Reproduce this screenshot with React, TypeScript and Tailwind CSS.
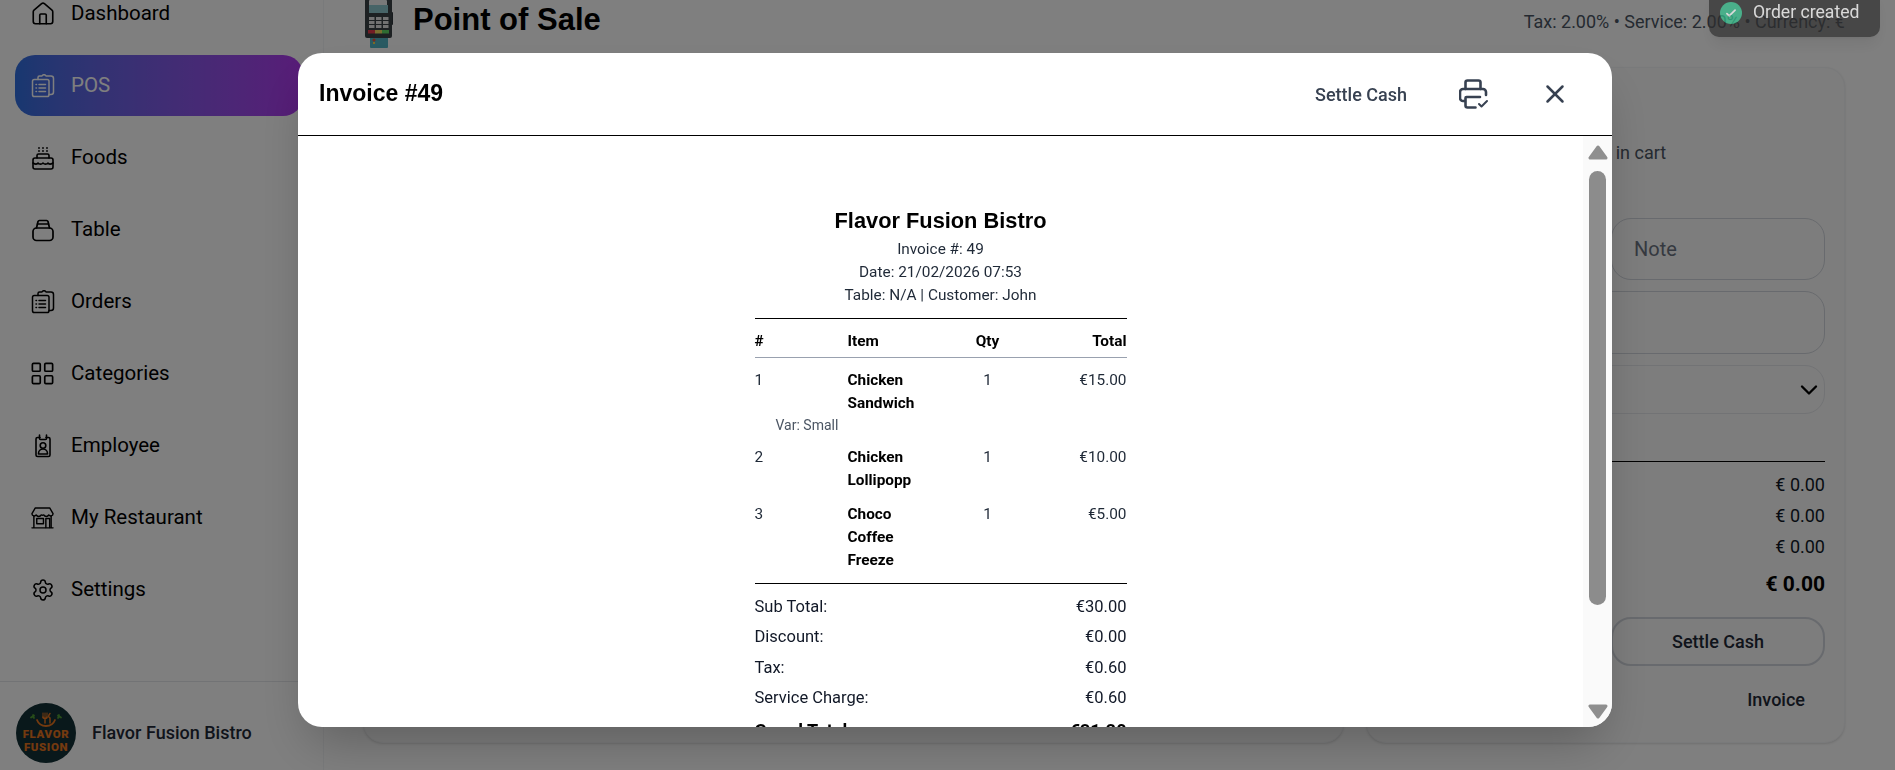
import { ChevronDown, House, LayoutGrid, Settings, X } from "lucide-react";
import type { ReactNode } from "react";

function ClipboardsIcon({ className }: { className?: string }) {
  return (
    <svg viewBox="0 0 24 24" fill="none" stroke="currentColor" strokeWidth="1.500" strokeLinecap="round" strokeLinejoin="round" className={className}>
      <path d="M7 5.500V3.500A1.500 1.500 0 0 1 8.500 2H11a2.200 2.200 0 0 1 4 0h5A2.500 2.500 0 0 1 22.500 4.500V18a2.500 2.500 0 0 1-2.500 2.500h-2" />
      <rect x="1.500" y="5.500" width="16.500" height="17" rx="1.800" />
      <path d="M5 10.500h.5M8 10.500h6.500M5 14h.5M8 14h6.500M5 17.500h.5M8 17.500h6.500" />
    </svg>
  );
}

function CakeIcon({ className }: { className?: string }) {
  return (
    <svg viewBox="0 0 24 24" fill="none" stroke="currentColor" strokeWidth="1.600" strokeLinecap="round" strokeLinejoin="round" className={className}>
      <path d="M8 2v.1M12 2v.1M16 2v.1M8 5v.1M12 5v.1M16 5v.1" strokeWidth="1.800" />
      <path d="M6 12V9.500A1.500 1.500 0 0 1 7.500 8h9A1.500 1.500 0 0 1 18 9.500V12" />
      <rect x="2" y="12" width="20" height="11" rx="2" />
      <path d="M2 17c2.500 1.500 4 1.500 5 0 1.300 1.500 3.700 1.500 5 0 1.300 1.500 3.700 1.500 5 0 1 1.500 2.500 1.500 5 0" />
    </svg>
  );
}

function TableIcon({ className }: { className?: string }) {
  return (
    <svg viewBox="0 0 24 24" fill="none" stroke="currentColor" strokeWidth="1.700" strokeLinecap="round" strokeLinejoin="round" className={className}>
      <path d="M5.500 10 7 3.500A1.500 1.500 0 0 1 8.500 2.500h7A1.500 1.500 0 0 1 17 3.500L18.500 10" />
      <path d="M6.500 6h11" />
      <rect x="2" y="10" width="20" height="12.500" rx="3.500" />
    </svg>
  );
}

function BadgeIcon({ className }: { className?: string }) {
  return (
    <svg viewBox="0 0 24 24" fill="none" stroke="currentColor" strokeWidth="1.600" strokeLinecap="round" strokeLinejoin="round" className={className}>
      <path d="M9 3.500H6.500A1.500 1.500 0 0 0 5 5v16a1.500 1.500 0 0 0 1.500 1.500h11A1.500 1.500 0 0 0 19 21V5a1.500 1.500 0 0 0-1.500-1.500H15" />
      <path d="M8.500 1v3.500a1 1 0 0 0 1 1h5a1 1 0 0 0 1-1V1" />
      <circle cx="12" cy="11.500" r="2.800" />
      <path d="M7.500 20v-.5a4.500 4.500 0 0 1 9 0v.5Z" />
    </svg>
  );
}

function StoreIcon({ className }: { className?: string }) {
  return (
    <svg viewBox="0 0 24 24" fill="none" stroke="currentColor" strokeWidth="1.500" strokeLinecap="round" strokeLinejoin="round" className={className}>
      <path d="M4.500 2h15L23 8a2.400 2.400 0 0 1-4.400 1.300 3 3 0 0 1-5.300 0 3 3 0 0 1-2.600 0 3 3 0 0 1-5.300 0A2.400 2.400 0 0 1 1 8Z" />
      <path d="M3 10.500V22.500M21 10.500V22.500M1 22.800h22" />
      <rect x="6" y="13" width="7" height="5.500" />
      <path d="M15.500 22.500V13h4v9.500" />
    </svg>
  );
}

function PrinterCheckIcon({ className }: { className?: string }) {
  return (
    <svg viewBox="0 0 30 30" fill="none" stroke="currentColor" strokeWidth="2.600" strokeLinecap="round" strokeLinejoin="round" className={className}>
      <path d="M6.500 10V3.500A2 2 0 0 1 8.500 1.500h11a2 2 0 0 1 2 2V10" />
      <path d="M6 22H4a3 3 0 0 1-3-3v-6a3 3 0 0 1 3-3h20a3 3 0 0 1 3 3v3" />
      <path d="M16.500 28.500H8.500a2 2 0 0 1-2-2V19a1 1 0 0 1 1-1H21" />
      <path d="m20 25 2.500 2.500L28 22" strokeWidth="2" />
    </svg>
  );
}

function TerminalArt() {
  return (
    <svg viewBox="0 0 28 51" className="ml-[2px] h-[51px] w-[28px] shrink-0">
      <rect x="5" y="38" width="18" height="13" rx="1" fill="#52b4c4" />
      <circle cx="9" cy="43" r="1.500" fill="#f0503c" />
      <rect x="8" y="45" width="2" height="2" fill="#f5d44a" />
      <rect x="26" y="15" width="2" height="13" rx="1" fill="#2f373c" />
      <rect x="0" y="0" width="27" height="41" rx="2" fill="#3a4247" />
      <rect x="4" y="3" width="18" height="11" rx="1" fill="#f2f3f3" />
      <rect x="4" y="8" width="19" height="8" fill="#8fc8cf" />
      {[20, 24, 28].map((y) =>
        [4, 11, 18].map((x) => <rect key={`${x}-${y}`} x={x} y={y} width="5.500" height="3" fill="#e4e4e4" />),
      )}
      <rect x="3" y="33" width="7" height="3.500" fill="#e63a4a" />
      <rect x="10" y="33" width="7" height="3.500" fill="#f2dc62" />
      <rect x="17" y="33" width="7" height="3.500" fill="#5ed864" />
    </svg>
  );
}

function LogoMark() {
  return (
    <svg viewBox="0 0 36 16" className="h-[16px] w-[36px]" fill="none" strokeLinecap="round">
      <path d="M3 5.500l3-2M6 6l-1-3M30 3.500l3 2M30 6l1-3" stroke="#4f9a32" strokeWidth="1.800" />
      <path d="M9 8c3 8 15 8 18 0" stroke="#e8741e" strokeWidth="1.800" />
      <path d="M15 1v4.500M17 1v4.500M19 1v4.500" stroke="#e8741e" strokeWidth="1" />
      <path d="M15 5c0 2 4 2 4 0M17 6v5" stroke="#e8741e" strokeWidth="1.500" />
      <path d="M22 1.500c-2 2-1.500 4 0 4.500v5" stroke="#e8741e" strokeWidth="1.500" />
    </svg>
  );
}

const navItems: { label: string; icon: ReactNode; active?: boolean }[] = [
  { label: "Dashboard", icon: <House className="h-[26px] w-[26px] shrink-0" strokeWidth={1.5} /> },
  { label: "POS", icon: <ClipboardsIcon className="h-[24px] w-[24px]" />, active: true },
  { label: "Foods", icon: <CakeIcon className="h-[24px] w-[24px]" /> },
  { label: "Table", icon: <TableIcon className="h-[24px] w-[24px]" /> },
  { label: "Orders", icon: <ClipboardsIcon className="h-[24px] w-[24px]" /> },
  { label: "Categories", icon: <LayoutGrid className="h-[27px] w-[27px] shrink-0" strokeWidth={1.5} /> },
  { label: "Employee", icon: <BadgeIcon className="h-[24px] w-[24px]" /> },
  { label: "My Restaurant", icon: <StoreIcon className="h-[23px] w-[23px]" /> },
  { label: "Settings", icon: <Settings className="h-[24px] w-[24px]" strokeWidth={1.5} /> },
];

const receiptItems = [
  { no: 1, name: ["Chicken", "Sandwich"], total: "€15.00", variant: "Var: Small" },
  { no: 2, name: ["Chicken", "Lollipopp"], total: "€10.00" },
  { no: 3, name: ["Choco", "Coffee", "Freeze"], total: "€5.00" },
];

const receiptTotals = [
  ["Sub Total:", "€30.00"],
  ["Discount:", "€0.00"],
  ["Tax:", "€0.60"],
  ["Service Charge:", "€0.60"],
];

function Sidebar() {
  return (
    <aside className="flex h-[770px] w-[324px] shrink-0 flex-col overflow-hidden border-r border-gray-100 bg-white">
      <nav className="-mt-[17px] flex flex-1 flex-col gap-[11px] pl-[15px] pr-[20px]">
        {navItems.map((item) => (
          <div
            key={item.label}
            className={
              item.active
                ? "flex h-[61px] items-center gap-[16px] rounded-[20px] bg-gradient-to-r from-[#2f6fe0] to-[#b038f0] pl-[15px] text-white"
                : "flex h-[61px] items-center gap-[16px] pl-[15px] text-black"
            }
          >
            <span className="flex h-[25px] w-[25px] items-center justify-center">{item.icon}</span>
            <span className="-mt-[1px] text-[20.500px]">{item.label}</span>
          </div>
        ))}
      </nav>
      <div className="flex h-[89px] items-start gap-4 border-t border-gray-200 pl-4 pt-[21px]">
        <div className="flex h-[60px] w-[60px] flex-col items-center rounded-full bg-[#123036] pt-[9px] text-[11.500px] leading-[13px] font-black tracking-[0.6px] text-[#e8741e]">
          <LogoMark />
          <span>FLAVOR</span>
          <span>FUSION</span>
        </div>
        <span className="mt-[18px] text-[18px] leading-[24px] font-medium text-[#1f2937]">Flavor Fusion Bistro</span>
      </div>
    </aside>
  );
}

function CartCard() {
  return (
    <section className="h-[676px] w-[479px] shrink-0 rounded-[20px] border border-gray-100 bg-[#fafafa] pt-[71px] pr-[19px] pl-5 shadow-sm">
      <p className="pr-[7px] text-center text-[18px] leading-[28px] text-[#4b5563]">No items in cart</p>
      <div className="mt-[51px] grid grid-cols-2 gap-[10px]">
        <div className="h-[62px] rounded-[20px] border border-gray-300" />
        <div className="flex h-[62px] items-center rounded-[20px] border border-gray-300 pb-[1px] pl-[22px] text-[20px] text-[#6b7280]">Note</div>
      </div>
      <div className="mt-[11px] h-[63px] rounded-[20px] border border-gray-300" />
      <div className="mt-[11px] flex h-[49px] items-center justify-end rounded-[20px] border border-gray-200 pr-[1px]">
        <ChevronDown className="h-[28px] w-[28px] text-black" strokeWidth={2} />
      </div>
      <div className="mt-[47px] border-t border-black pt-[7px] text-right text-[18px] leading-[31px] text-[#111827]">
        <p>€ 0.00</p>
        <p>€ 0.00</p>
        <p>€ 0.00</p>
        <p className="mt-[7px] text-[21px] font-bold text-black">€ 0.00</p>
      </div>
      <div className="mt-[17px] grid grid-cols-2 gap-[10px]">
        <div />
        <div className="flex h-[49px] items-center justify-center rounded-[20px] border-2 border-gray-300 text-[18px] font-medium text-[#1f2937]">Settle Cash</div>
      </div>
      <p className="mt-[20px] pr-[20px] text-right text-[18px] font-medium text-[#1f2937]">Invoice</p>
    </section>
  );
}

function Receipt() {
  return (
    <div className="mx-auto w-[372px] pt-[70px] font-['Roboto',sans-serif] text-black">
      <h3 className="text-center font-['Liberation_Sans',sans-serif] text-[21.800px] leading-[30px] font-bold">Flavor Fusion Bistro</h3>
      <div className="mt-[2px] text-center text-[15.360px] leading-[23px] text-[#1f2937]">
        <p>Invoice #: 49</p>
        <p>Date: 21/02/2026 07:53</p>
        <p>Table: N/A | Customer: John</p>
      </div>
      <div className="mt-[11px] border-t border-black" />
      <div className="grid h-[39px] grid-cols-[93px_80px_120px_79px] items-center border-b border-gray-400 pt-[7px] text-[15.360px] font-bold">
        <span>#</span>
        <span>Item</span>
        <span className="text-center">Qty</span>
        <span className="text-right">Total</span>
      </div>
      <div className="pt-[11px] text-[15.360px]">
        {receiptItems.map((item) => (
          <div key={item.no} className="pb-[11px]">
            <div className="grid grid-cols-[93px_80px_120px_79px] leading-[23px]">
              <span className="text-[#1f2937]">{item.no}</span>
              <span className="font-bold">
                {item.name.map((part) => (
                  <span key={part} className="block">{part}</span>
                ))}
              </span>
              <span className="text-center text-[#1f2937]">1</span>
              <span className="text-right text-[#1f2937]">{item.total}</span>
            </div>
            {item.variant ? <p className="pl-[21px] text-[14px] leading-[20px] text-[#4b5563]">{item.variant}</p> : null}
          </div>
        ))}
      </div>
      <div className="border-t border-black pt-[8px] text-[16.500px] leading-[30.400px] text-[#111827]">
        {receiptTotals.map(([label, value]) => (
          <div key={label} className="flex justify-between">
            <span>{label}</span>
            <span>{value}</span>
          </div>
        ))}
        <div className="flex justify-between pt-[2px] text-[18px] font-bold text-black">
          <span>Grand Total:</span>
          <span>€31.20</span>
        </div>
      </div>
    </div>
  );
}

function InvoiceModal() {
  return (
    <div className="fixed inset-0 flex items-start justify-start bg-black/50 pl-[298px] pt-[53px]">
      <div className="flex h-[674px] w-[1314px] flex-col overflow-hidden rounded-[24px] bg-white shadow-2xl">
        <header className="flex h-[83px] shrink-0 items-center justify-between border-b border-black pl-[21px] pr-[42px]">
          <h2 className="-mt-[1px] font-['Liberation_Sans',sans-serif] text-[23px] font-bold text-black">Invoice #49</h2>
          <div className="flex items-center text-[#374151]">
            <span className="mr-[52px] text-[18px] font-medium">Settle Cash</span>
            <PrinterCheckIcon className="mr-[51px] h-[30px] w-[30px]" />
            <X className="h-[30px] w-[30px]" strokeWidth={2} />
          </div>
        </header>
        <div className="flex min-h-0 flex-1">
          <div className="min-w-0 flex-1 overflow-hidden">
            <Receipt />
          </div>
          <div className="flex w-[29px] shrink-0 flex-col items-center bg-[#fafafa] pt-[9px] pb-[8px]">
            <svg viewBox="0 0 20 15" className="h-[15px] w-[20px]" fill="#8f8f8f" stroke="#8f8f8f" strokeWidth="3" strokeLinejoin="round">
              <path d="M10 2 2 13h16Z" />
            </svg>
            <div className="mt-[11px] w-[17px] flex-1 rounded-full bg-[#8c8c8c]" />
            <svg viewBox="0 0 20 15" className="mt-[99px] h-[15px] w-[20px]" fill="#8f8f8f" stroke="#8f8f8f" strokeWidth="3" strokeLinejoin="round">
              <path d="M10 13 2 2h16Z" />
            </svg>
          </div>
        </div>
      </div>
    </div>
  );
}

export default function App() {
  return (
    <div className="flex h-[770px] overflow-hidden bg-white font-['Roboto',sans-serif]">
      <Sidebar />
      <main className="min-w-0 flex-1 bg-white pl-[39px] pr-[50px]">
        <div className="-mt-[3px] flex h-[70px] items-start justify-between">
          <div className="flex items-start gap-[20px]">
            <TerminalArt />
            <h1 className="pt-[1px] font-['Liberation_Sans',sans-serif] text-[31px] leading-[44px] font-bold text-black">Point of Sale</h1>
          </div>
          <p className="pt-[11px] text-[18px] leading-[28px] text-[#4b5563]">Tax: 2.00% • Service: 2.00% • Currency: €</p>
        </div>
        <div className="flex gap-[22px]">
          <section className="h-[676px] min-w-0 flex-1 rounded-[20px] border border-gray-100 bg-[#fafafa] shadow-sm" />
          <CartCard />
        </div>
      </main>
      <InvoiceModal />
      <div className="fixed -top-[12px] left-[1709px] flex h-[49px] w-[171px] items-center gap-[11px] rounded-[10px] bg-[#2f2f2f] pl-[11px] text-[17.600px] text-white opacity-70 shadow-lg">
        <span className="flex h-[22px] w-[22px] shrink-0 items-center justify-center rounded-full bg-[#34c38f]">
          <svg viewBox="0 0 24 24" className="h-[14px] w-[14px]" fill="none" stroke="white" strokeWidth="3" strokeLinecap="round" strokeLinejoin="round">
            <path d="m5 13 4 4 10-10" />
          </svg>
        </span>
        <span>Order created</span>
      </div>
    </div>
  );
}
